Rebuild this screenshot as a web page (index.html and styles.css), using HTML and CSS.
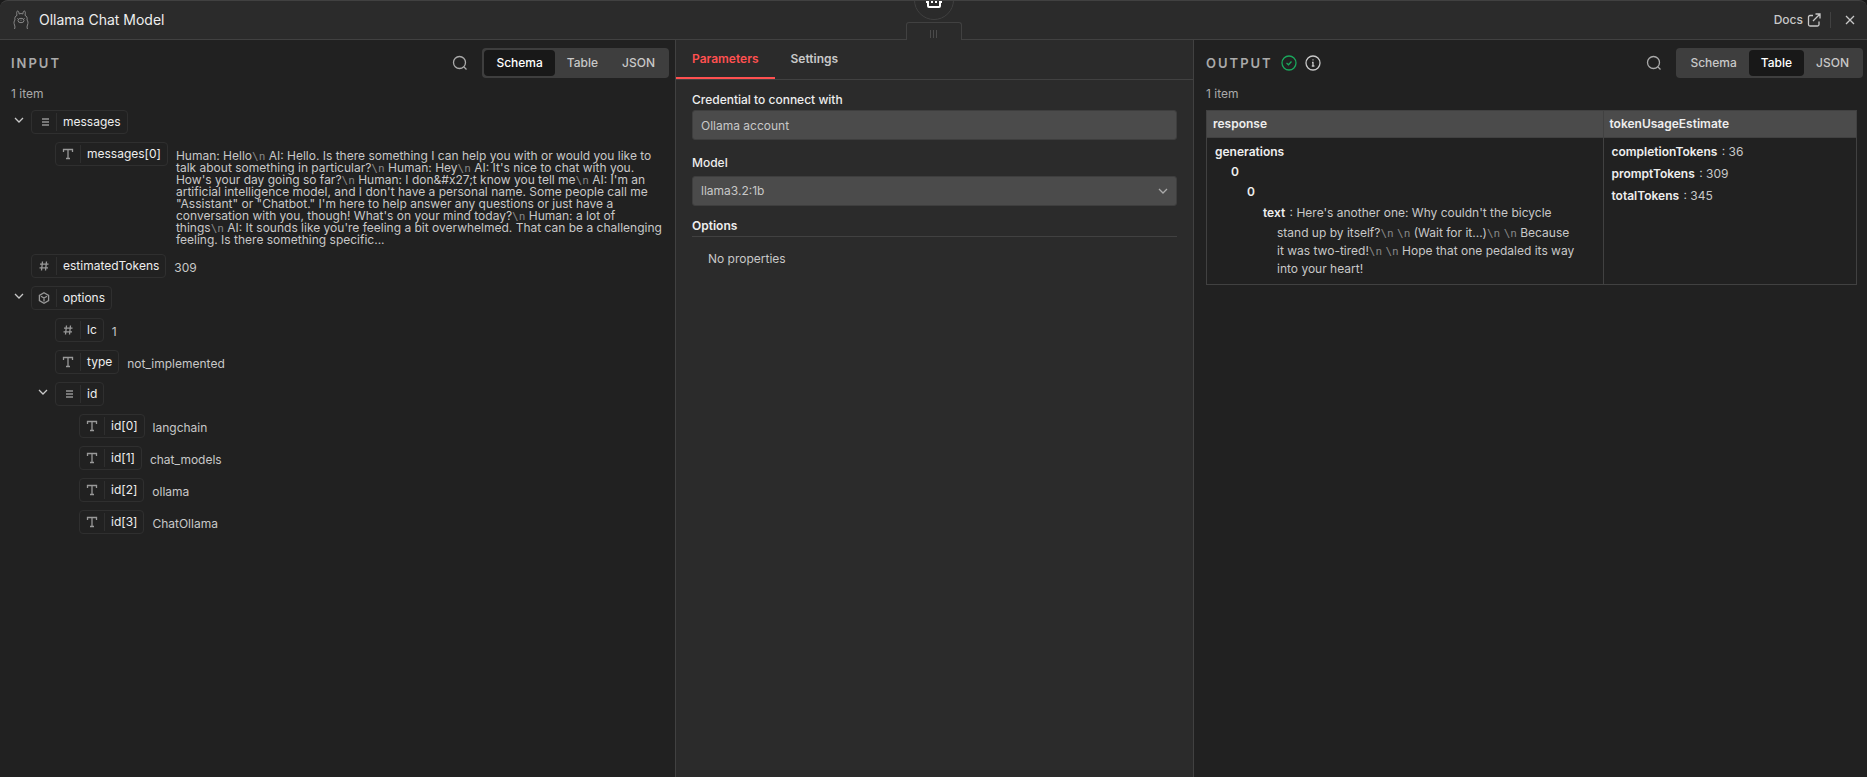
FILE: index.html
```html
<!DOCTYPE html>
<html lang="en">
<head>
<meta charset="UTF-8">
<meta name="viewport" content="width=device-width, initial-scale=1.0">
<title>Ollama Chat Model</title>
<link rel="stylesheet" href="styles.css">
</head>
<body>

<!-- shared icons -->
<svg class="defs" aria-hidden="true">
  <symbol id="i-text" viewBox="0 0 12 12"><path d="M1.500 4V1.500h9V4M6 1.500v9M4 10.500h4"/></symbol>
  <symbol id="i-hash" viewBox="0 0 12 12"><path d="M4.500 1.500l-1 9M8.500 1.500l-1 9M2 4.200h8.500M1.500 7.800H10"/></symbol>
  <symbol id="i-list" viewBox="0 0 12 12"><path d="M4 3h7M4 6h7M4 9h7"/></symbol>
  <symbol id="i-cube" viewBox="0 0 12 12"><path d="M6 .8l4.600 2.600v5.200L6 11.200 1.400 8.600V3.400zM3 4.300L6 6l3-1.700M6 6v3.500"/></symbol>
  <symbol id="i-down" viewBox="0 0 12 12"><path d="M2 4l4 4 4-4"/></symbol>
  <symbol id="i-search" viewBox="0 0 16 16"><circle cx="7.500" cy="7.500" r="6"/><path d="M12 12l2.500 2.500"/></symbol>
</svg>

<div class="ndv">
  <header class="top">
    <svg class="llama" viewBox="0 0 16 20"><path d="M1.500 19c.6-1.500.6-2.500 0-4-.8-2-.6-4 .5-5-.6-2 .2-4 2-4.600C3.400 3 3.600 1 4.600 1s1.400 1.500 1.600 3c1-.6 2.600-.6 3.600 0 .2-1.500.6-3 1.600-3s1.200 2 .6 4.400c1.800.6 2.600 2.600 2 4.600 1.100 1 1.300 3 .5 5-.6 1.500-.6 2.500 0 4"/><ellipse cx="8" cy="10.500" rx="3" ry="2.200"/><path d="M4.200 8.500h.6M11.200 8.500h.6M7.500 10.200l.5.400.5-.4"/></svg>
    <h1>Ollama Chat Model</h1>
    <a href="#" class="docs">Docs
      <svg viewBox="0 0 14 14"><path d="M6 2.500H3A1.500 1.500 0 0 0 1.500 4v7.500A1.500 1.500 0 0 0 3 13h7.500a1.500 1.500 0 0 0 1.500-1.500V8.500M8.500 1H13v4.500M13 1L6 8"/></svg>
    </a>
    <button class="close" aria-label="Close"><svg viewBox="0 0 12 12"><path d="M2 2l8 8M10 2l-8 8"/></svg></button>
    <div class="parent_node"><svg viewBox="0 0 18 18"><rect x="3" y="5" width="12" height="11" rx="1"/><path d="M1 11h2M15 11h2M7 9v3M11 9v3"/></svg></div>
    <div class="drag"><i></i><i></i><i></i></div>
  </header>

  <main class="panels">
    <section class="panel input">
      <div class="panel_head">
        <h2>INPUT</h2>
        <button class="search" aria-label="Search input"><svg><use href="#i-search"/></svg></button>
        <div class="modes">
          <button class="on">Schema</button>
          <button>Table</button>
          <button>JSON</button>
        </div>
      </div>
      <p class="count">1 item</p>
      <ul class="schema">
        <li>
          <div class="row">
            <button class="toggle" aria-label="Toggle messages"><svg><use href="#i-down"/></svg></button>
            <span class="pill"><svg class="thick"><use href="#i-list"/></svg><b>messages</b></span>
          </div>
          <ul>
            <li class="row"><span class="pill"><svg><use href="#i-text"/></svg><b>messages[0]</b></span><span class="value long">Human: Hello<em>\n</em> AI: Hello. Is there something I can help you with or would you like to talk about something in particular?<em>\n</em> Human: Hey<em>\n</em> AI: It's nice to chat with you. How's your day going so far?<em>\n</em> Human: I don&amp;#x27;t know you tell me<em>\n</em> AI: I'm an artificial intelligence model, and I don't have a personal name. Some people call me "Assistant" or "Chatbot." I'm here to help answer any questions or just have a conversation with you, though! What's on your mind today?<em>\n</em> Human: a lot of things<em>\n</em> AI: It sounds like you're feeling a bit overwhelmed. That can be a challenging feeling. Is there something specific...</span></li>
          </ul>
        </li>
        <li class="row"><span class="pill"><svg><use href="#i-hash"/></svg><b>estimatedTokens</b></span><span class="value">309</span></li>
        <li>
          <div class="row">
            <button class="toggle" aria-label="Toggle options"><svg><use href="#i-down"/></svg></button>
            <span class="pill"><svg><use href="#i-cube"/></svg><b>options</b></span>
          </div>
          <ul>
            <li class="row"><span class="pill"><svg><use href="#i-hash"/></svg><b>lc</b></span><span class="value">1</span></li>
            <li class="row"><span class="pill"><svg><use href="#i-text"/></svg><b>type</b></span><span class="value">not_implemented</span></li>
            <li>
              <div class="row">
                <button class="toggle" aria-label="Toggle id"><svg><use href="#i-down"/></svg></button>
                <span class="pill"><svg class="thick"><use href="#i-list"/></svg><b>id</b></span>
              </div>
              <ul>
                <li class="row"><span class="pill"><svg><use href="#i-text"/></svg><b>id[0]</b></span><span class="value">langchain</span></li>
                <li class="row"><span class="pill"><svg><use href="#i-text"/></svg><b>id[1]</b></span><span class="value">chat_models</span></li>
                <li class="row"><span class="pill"><svg><use href="#i-text"/></svg><b>id[2]</b></span><span class="value">ollama</span></li>
                <li class="row"><span class="pill"><svg><use href="#i-text"/></svg><b>id[3]</b></span><span class="value">ChatOllama</span></li>
              </ul>
            </li>
          </ul>
        </li>
      </ul>
    </section>

    <section class="panel params">
      <nav class="tabs">
        <a href="#" class="on">Parameters</a>
        <a href="#">Settings</a>
      </nav>
      <form class="form">
        <label for="credential">Credential to connect with</label>
        <input type="text" id="credential" value="Ollama account">
        <label for="model">Model</label>
        <div class="select">
          <select id="model"><option>llama3.2:1b</option></select>
          <svg><use href="#i-down"/></svg>
        </div>
        <h3>Options</h3>
        <p class="empty">No properties</p>
      </form>
    </section>

    <section class="panel output">
      <div class="panel_head">
        <h2>OUTPUT</h2>
        <svg class="status ok" viewBox="0 0 16 16"><circle cx="8" cy="8" r="7"/><path d="M5.500 8l2 1.800L10.500 6.500"/></svg>
        <svg class="status" viewBox="0 0 16 16"><circle cx="8" cy="8" r="7"/><path d="M7 7.500h1v3.500M6.800 11h2.600M7.500 4.800h1"/></svg>
        <button class="search" aria-label="Search output"><svg><use href="#i-search"/></svg></button>
        <div class="modes">
          <button>Schema</button>
          <button class="on">Table</button>
          <button>JSON</button>
        </div>
      </div>
      <p class="count">1 item</p>
      <table>
        <thead>
          <tr><th class="col_response">response</th><th>tokenUsageEstimate</th></tr>
        </thead>
        <tbody>
          <tr>
            <td>
              <div class="tree"><b>generations</b>
                <div class="node"><b>0</b>
                  <div class="node"><b>0</b>
                    <div class="node leaf"><b>text</b> : Here's another one: Why couldn't the bicycle stand up by itself?<em>\n</em> <em>\n</em> (Wait for it...)<em>\n</em> <em>\n</em> Because it was two-tired!<em>\n</em> <em>\n</em> Hope that one pedaled its way into your heart!</div>
                  </div>
                </div>
              </div>
            </td>
            <td>
              <dl>
                <div><dt>completionTokens</dt> <dd>: 36</dd></div>
                <div><dt>promptTokens</dt> <dd>: 309</dd></div>
                <div><dt>totalTokens</dt> <dd>: 345</dd></div>
              </dl>
            </td>
          </tr>
        </tbody>
      </table>
    </section>
  </main>
</div>

</body>
</html>
```
FILE: styles.css
```css
* {margin:0; padding:0; box-sizing: border-box;}
body {background: #1b1b1b; color: #c8c8c8; font: 12px/18px Inter, "Open Sans", sans-serif;}
ul {list-style: none;}
a {color: inherit; text-decoration: none;}
em {color: #888; font: normal 11px/1px "DejaVu Sans Mono", monospace;}
button {border: 0; background: none; color: inherit; font: inherit; cursor: pointer;}
svg {fill: none; stroke: currentColor; stroke-width: 1.3; flex: none;}
.defs {position: absolute; width: 0; height: 0;}

.ndv {display: flex; flex-direction: column; min-height: 100vh; border-top: 1px solid #414141; border-radius: 8px 8px 0 0; background: #2b2b2b; overflow: hidden;}

/* header */
.top {position: relative; display: flex; align-items: center; height: 39px; padding: 0 11px 0 13px; border-bottom: 1px solid #414141;}
.top .llama {width: 16px; height: 20px; margin-right: 10px; color: #888; stroke-width: 1;}
.top h1 {flex: 1; color: #eee; font-size: 14px; font-weight: 400;}
.top .docs {display: flex; align-items: center; gap: 4px; padding-right: 9px; border-right: 1px solid #414141; line-height: 16px; font-weight: 500;}
.top .docs svg {width: 14px; height: 14px;}
.top .close {display: flex; margin-left: 13px;}
.top .close svg {width: 12px; height: 12px;}
.parent_node {position: absolute; left: 50%; top: -21px; width: 40px; height: 40px; margin-left: -20px; padding: 10px; border: 1px solid #414141; border-radius: 50%; background: #2b2b2b; color: #fff;}
.parent_node svg {display: block; width: 18px; height: 18px; stroke-width: 2;}
.drag {position: absolute; left: 50%; bottom: -1px; display: flex; justify-content: center; align-items: center; gap: 2px; width: 56px; height: 18px; margin-left: -28px; padding-top: 4px; border: 1px solid #414141; border-bottom: 0; border-radius: 3px 3px 0 0; background: #2b2b2b;}
.drag i {width: 1px; height: 8px; background: #4b4b4b;}

/* panels */
.panels {flex: 1; display: grid; grid-template-columns: 675fr 519fr 673fr;}
.panel {min-width: 0; background: #212121;}
.panel_head {display: flex; align-items: center; height: 30px; margin-top: 8px;}
.panel_head h2 {color: #aaa; font-size: 13px; font-weight: 600; letter-spacing: 2px;}
.search {display: flex; margin-left: auto; color: #aaa;}
.search svg {width: 16px; height: 16px;}
.modes {display: flex; margin-left: 14px; padding: 2px; border-radius: 4px; background: #3e3e3e; font-weight: 500;}
.modes button {height: 26px; padding: 0 12px; border-radius: 4px;}
.modes .on {background: #181818; color: #fff;}
.count {margin-top: 7px; color: #aaa;}
.input {padding: 0 6px 0 11px;}
.output {padding: 0 4px 0 12px;}
.status {width: 16px; height: 16px; margin-left: 8px;}
.status.ok {color: #1aa75c;}

/* schema */
.schema {margin-top: 7px; padding-left: 20px;}
.schema ul {padding-left: 24px;}
.row {position: relative; display: flex; align-items: flex-start; margin-bottom: 8px;}
.toggle {position: absolute; left: -18px; top: 4px; display: flex;}
.toggle svg {width: 12px; height: 12px;}
.pill {display: flex; align-items: center; height: 24px; padding: 0 6px; border: 1px solid #2f2f2f; border-radius: 4px; color: #999; white-space: nowrap;}
.pill svg {width: 12px; height: 12px; margin-right: 6px;}
.pill .thick {color: #777; stroke-width: 2;}
.pill b {padding-left: 6px; border-left: 1px solid #2f2f2f; color: #eee; font-weight: 400;}
.value {padding: 5px 5px 0 8px;}
.value.long {padding-top: 8px; line-height: 12px;}

/* parameters */
.params {border: solid #414141; border-width: 0 1px; background: #2b2b2b;}
.tabs {display: flex; border-bottom: 1px solid #414141; font-weight: 600;}
.tabs a {height: 39px; padding: 10px 16px 0; border-bottom: 2px solid transparent;}
.tabs .on {border-color: #ff5050; color: #ff5050;}
.form {padding: 11px 16px;}
.form label {display: block; margin-bottom: 1px; color: #eee; font-weight: 500;}
.form input, .form select {display: block; width: 100%; height: 30px; padding: 0 8px; border: 1px solid #3e3e3e; border-radius: 3px; background: #4b4b4b; color: #c8c8c8; font: inherit; appearance: none;}
.form input {margin-bottom: 14px;}
.select {position: relative; margin: 4px 0 10px;}
.select svg {position: absolute; right: 8px; top: 9px; width: 12px; height: 12px; color: #aaa;}
.form h3 {border-bottom: 1px solid #414141; color: #eee; font-size: 12px; font-weight: 600; line-height: 20px;}
.empty {padding: 13px 16px;}

/* output table */
table {width: calc(100% - 6px); margin-top: 7px; border-collapse: collapse; table-layout: fixed;}
th, td {border: 1px solid #414141; text-align: left; vertical-align: top;}
th {height: 27px; padding: 4px 6px; background: #4b4b4b; color: #eee; font-weight: 600;}
td {padding: 4px 8px 6px;}
td b, dt {margin-right: 1px; color: #eee; font-weight: 600;}
.col_response {width: 61%;}
.tree {line-height: 20px;}
.node {padding-left: 16px;}
.leaf {padding: 0 20px 0 30px; text-indent: -14px; line-height: 18px;}
.leaf b {line-height: 22px;}
dl {padding-top: 1px;}
dl div {margin-bottom: 4px;}
dt, dd {display: inline;}
```
